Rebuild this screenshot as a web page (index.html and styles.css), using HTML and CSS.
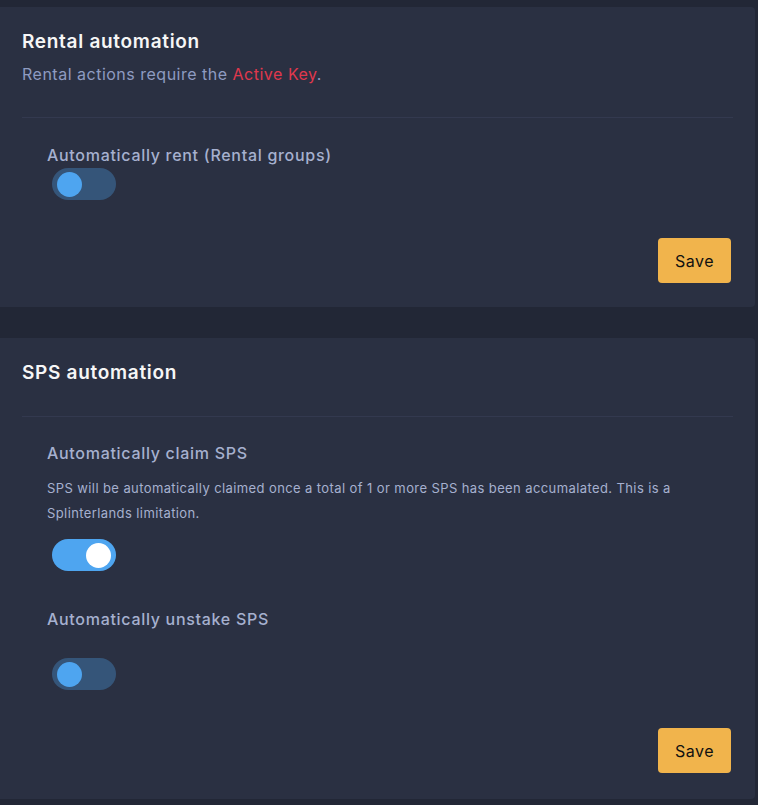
FILE: index.html
```html
<!DOCTYPE html>
<html>
<head>
<meta charset="utf-8">
<link rel="stylesheet" href="styles.css">
</head>
<body>
<div class="page">
  <section class="card">
    <h2 class="card-title">Rental automation</h2>
    <p class="card-sub">Rental actions require the <span class="danger">Active Key</span>.</p>
    <hr class="divider">
    <div class="group first">
      <div class="label">Automatically rent (Rental groups)</div>
      <div class="switch off"><span class="knob"></span></div>
    </div>
    <div class="actions"><button class="btn-save">Save</button></div>
  </section>

  <section class="card card-sps">
    <h2 class="card-title">SPS automation</h2>
    <hr class="divider">
    <div class="group first sps">
      <div class="label">Automatically claim SPS</div>
      <p class="desc">SPS will be automatically claimed once a total of 1 or more SPS has been accumalated. This is a Splinterlands limitation.</p>
      <div class="switch on after-desc"><span class="knob"></span></div>
    </div>
    <div class="group second">
      <div class="label">Automatically unstake SPS</div>
      <div class="switch off spaced"><span class="knob"></span></div>
    </div>
    <div class="actions"><button class="btn-save">Save</button></div>
  </section>
</div>
</body>
</html>
```

FILE: styles.css
```css
* { box-sizing: border-box; }
html, body {
  margin: 0;
  padding: 0;
  background: #222736;
}
body {
  font-family: Inter, "Open Sans", sans-serif;
  color: #a6b0cf;
}
.page {
  width: 755px;
  padding-top: 7px;
  display: flex;
  flex-direction: column;
  gap: 31px;
}
.card {
  background: #2a3042;
  border-radius: 0 4px 4px 0;
  padding: 24px 22px 24px 22px;
  display: flex;
  flex-direction: column;
}
.card-sps { padding-bottom: 26px; }
.card-title {
  margin: 0;
  font-size: 19px;
  line-height: 22px;
  font-weight: 600;
  letter-spacing: 0.7px;
  color: #f6f6f6;
}
.card-sub {
  margin: 10px 0 0 0;
  font-size: 16px;
  line-height: 22px;
  letter-spacing: 0.5px;
  color: #8e9bc1;
}
.danger { color: #e0384d; }
.divider {
  margin: 32px 0 0 0;
  border: 0;
  border-top: 1px solid #33394f;
  height: 0;
}
.group {
  padding-left: 25px;
}
.group.first { margin-top: 26px; }
.group.first.sps { margin-top: 25px; }
.group.second { margin-top: 37px; }
.label {
  font-size: 16px;
  line-height: 22px;
  font-weight: 500;
  letter-spacing: 0.7px;
  color: #a6b0cf;
}
.desc {
  margin: 12px 0 0 0;
  font-size: 13px;
  line-height: 25px;
  letter-spacing: 0.4px;
  color: #a6b0cf;
}
.switch {
  width: 64px;
  height: 32px;
  border-radius: 16px;
  margin: 2px 0 0 5px;
  position: relative;
}
.switch.after-desc { margin-top: 13px; }
.switch.spaced { margin-top: 28px; }
.switch.off { background: #355579; }
.switch.on { background: #4ea5f0; }
.knob {
  position: absolute;
  top: 3.5px;
  width: 25px;
  height: 25px;
  border-radius: 50%;
}
.switch.off .knob { left: 5px; background: #4ea5f0; }
.switch.on .knob { right: 5px; background: #ffffff; }
.actions {
  display: flex;
  justify-content: flex-end;
  margin-top: 38px;
  padding-right: 2px;
}
.btn-save {
  width: 73px;
  height: 45px;
  background: #f1b44c;
  border: 0;
  border-radius: 4px;
  font-family: Inter, "Open Sans", sans-serif;
  font-size: 16px;
  letter-spacing: 0.5px;
  color: #111;
  cursor: pointer;
}
```
